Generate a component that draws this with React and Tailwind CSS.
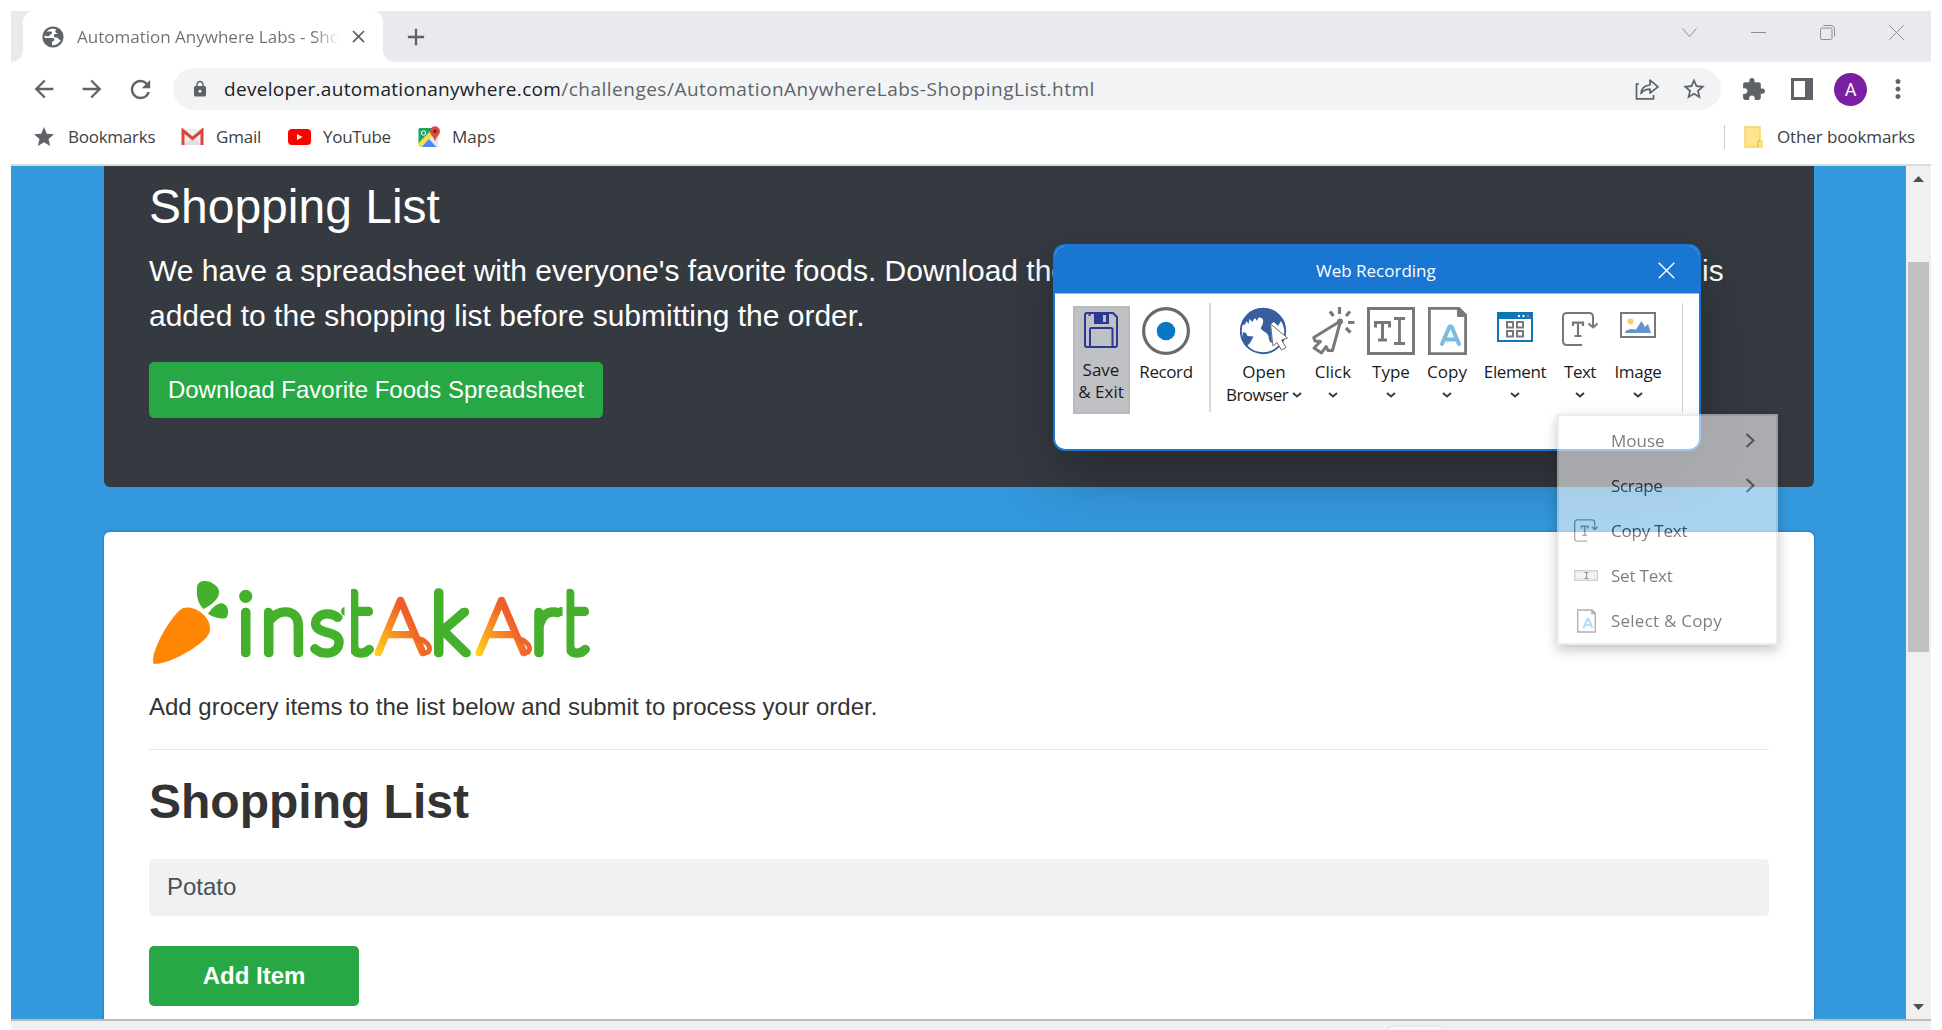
import React from "react";
import {
  MdArrowBack,
  MdArrowForward,
  MdRefresh,
  MdLock,
  MdStar,
  MdStarBorder,
  MdExtension,
  MdMoreVert,
  MdClose,
  MdAdd,
} from "react-icons/md";

const ui = "font-['Open_Sans','Noto_Sans',sans-serif]";
const page = "font-['Liberation_Sans',Arial,sans-serif]";

function GlobeFavicon() {
  return (
    <svg className="size-[22px] shrink-0" viewBox="0 0 22 22">
      <circle cx="11" cy="11" r="10.600" fill="#5f6368" />
      <path
        d="M14.500 3.300C10 1.500 4.500 3.500 2.900 8.200C2.500 9.800 2.500 11 2.700 12H10.500C12.500 12 12.800 13.500 12.200 14.500C11.500 15.500 10 15 10 16.500V19.300C14 19.500 17.500 17.200 18.900 13.800C17.800 14.300 17 13.600 16.300 12.600C15.600 11.400 14.200 11.700 12.900 11.300C11.300 10.900 11.400 9 12.600 8.300C13.600 7.700 15.200 8.300 16 7.300C14.600 7.400 13.200 6.500 13.300 5.200C13.400 4.300 13.800 3.700 14.500 3.300Z"
        fill="#fff"
      />
      <path d="M3.500 5.500H8.500C10.500 5.500 10.300 7.700 9 8.300C7.700 8.900 7.500 10.300 6 10.500L2.500 9.500Z" fill="#5f6368" />
    </svg>
  );
}

function TabStrip() {
  return (
    <div className="flex h-[51px] bg-[#e8eaed]">
      <div className="w-3 bg-white">
        <div className="h-full rounded-br-[12px] bg-[#e8eaed]" />
      </div>
      <div className="flex w-[360px] items-center rounded-t-[11px] bg-white pl-[19px] pr-[14px]">
        <GlobeFavicon />
        <div className="ml-[13px] w-[264px] overflow-hidden whitespace-nowrap bg-gradient-to-r from-[#6b6f74] from-90% to-white to-100% bg-clip-text text-[17px] leading-[24px] text-transparent">
          Automation Anywhere Labs - Sho
        </div>
        <MdClose className="ml-[9px] size-[21px] shrink-0 text-[#5f6368]" />
      </div>
      <div className="w-3 bg-white">
        <div className="h-full rounded-bl-[12px] bg-[#e8eaed]" />
      </div>
      <MdAdd className="ml-[7px] mt-[12px] size-[28px] text-[#5f6368]" />
      <div className="ml-auto mr-[27px] mt-[14px] flex gap-[54px]">
        <svg className="size-[15px]" viewBox="0 0 15 15" fill="none" stroke="#8d9095">
          <path d="M0.500 3.500L7.500 11.500L14.500 3.500" />
        </svg>
        <svg className="size-[15px]" viewBox="0 0 15 15" fill="none" stroke="#8d9095">
          <path d="M0 7.500H15" />
        </svg>
        <svg className="size-[15px]" viewBox="0 0 15 15" fill="none" stroke="#8d9095">
          <rect x="0.500" y="3" width="11.500" height="11.500" rx="1.500" />
          <path d="M3.500 0.500H11Q14.500 0.500 14.500 4V11.500" />
        </svg>
        <svg className="size-[15px]" viewBox="0 0 15 15" fill="none" stroke="#8d9095">
          <path d="M0.300 0.300L14.700 14.700M14.700 0.300L0.300 14.700" />
        </svg>
      </div>
    </div>
  );
}

function Toolbar() {
  return (
    <div className="flex h-[54px] items-center text-[#5f6368]">
      <MdArrowBack className="ml-[19px] size-[28px]" />
      <MdArrowForward className="ml-[20px] size-[28px]" />
      <MdRefresh className="ml-[20px] size-[29px]" />
      <div className="ml-[18px] flex h-[42px] w-[1548px] items-center rounded-full bg-[#f1f3f4] pl-[18px] pr-[14px]">
        <MdLock className="size-[18px]" />
        <div className="ml-[15px] whitespace-nowrap text-[19px] leading-[28px] tracking-[0.500px] text-[#5f6368]">
          <span className="tracking-[0.310px] text-[#202124]">developer.automationanywhere.com</span>
          /challenges/AutomationAnywhereLabs-ShoppingList.html
        </div>
        <svg className="ml-auto h-[22px] w-[24px]" viewBox="0 0 24 22" fill="none" stroke="#5f6368" strokeWidth="1.700">
          <path d="M4 6H1.500V20.800H18.500V17" />
          <path d="M6 15.500C6.500 10.500 9.500 7.300 15 7V2.200L23 8.800L15 15V11.200C11 11.200 8 12.500 6 15.500Z" strokeLinejoin="round" />
        </svg>
        <MdStarBorder className="ml-[22px] size-[26px]" />
      </div>
      <MdExtension className="ml-[20px] size-[25px]" />
      <svg className="ml-[25px] h-[22px] w-[22px]" viewBox="0 0 22 22">
        <path fillRule="evenodd" d="M0 0H22V22H0ZM3 3V19H14V3Z" fill="#5f6368" />
      </svg>
      <div className="ml-[21px] flex size-[33px] items-center justify-center rounded-full bg-[#7b1fa2] font-['Roboto',sans-serif] text-[18px] text-white">
        A
      </div>
      <MdMoreVert className="ml-[16px] size-[30px]" />
    </div>
  );
}

function GmailIcon() {
  return (
    <svg className="h-[18px] w-[23px]" viewBox="0 0 23 18">
      <path d="M2 1H21V17H2Z" fill="#eeeeee" />
      <path d="M3 17L11.500 9L20 17Z" fill="#e0e0e0" />
      <path d="M2 17V2.500L11.500 10.500L21 2.500V17" fill="none" stroke="#db4437" strokeWidth="3" />
    </svg>
  );
}

function YouTubeIcon() {
  return (
    <svg className="h-[16px] w-[23px]" viewBox="0 0 23 16">
      <rect width="23" height="16" rx="4" fill="#ff0000" />
      <path d="M9 5V11L14.500 8Z" fill="#fff" />
    </svg>
  );
}

function MapsIcon() {
  return (
    <svg className="h-[22px] w-[23px]" viewBox="0 0 23 22">
      <rect x="0.500" y="2" width="19.500" height="19" rx="1.500" fill="#e8e8e8" />
      <path d="M0.500 3.500Q0.500 2 2 2H16L0.500 18.500Z" fill="#1fa463" />
      <path d="M0.500 17L14 3.500L18 6L3 21H2Q0.500 21 0.500 19.500Z" fill="#ffd94a" />
      <path d="M3.500 21L11 13L18.500 21Z" fill="#4a8af4" />
      <circle cx="5.500" cy="7" r="2.200" fill="none" stroke="#fff" strokeWidth="1" />
      <path d="M17 0.300A5 5 0 0 1 22 5.300C22 9.300 17.500 11 17 16C16.500 11 12 9.300 12 5.300A5 5 0 0 1 17 0.300Z" fill="#dd4b3e" />
      <circle cx="17" cy="5.300" r="1.800" fill="#7d1e17" />
    </svg>
  );
}

function Bookmarks() {
  return (
    <div className="flex h-[48px] items-center pb-[6px] text-[17px] leading-[24px] text-[#3c4043]">
      <MdStar className="ml-[21px] size-[24px] text-[#5f6368]" />
      <span className="ml-[12px] w-[90px] whitespace-nowrap tracking-[-0.250px]">Bookmarks</span>
      <div className="ml-[23px]"><GmailIcon /></div>
      <span className="ml-[12px] w-[49px] tracking-[-0.200px]">Gmail</span>
      <div className="ml-[23px]"><YouTubeIcon /></div>
      <span className="ml-[12px] w-[72px] tracking-[-0.300px]">YouTube</span>
      <div className="ml-[23px]"><MapsIcon /></div>
      <span className="ml-[11px]">Maps</span>
      <div className="ml-auto h-[24px] w-px bg-[#c9cbce]" />
      <svg className="ml-[19px] h-[22px] w-[19px]" viewBox="0 0 19 22">
        <path d="M1 1H16V14.500Q18 14.500 18 16.500V21H1Z" fill="#ffe48f" stroke="#f8d45c" strokeWidth="1.400" />
        <path d="M14 20.500V16.500Q14 14.500 16 14.500" fill="none" stroke="#eec02f" strokeWidth="1.400" />
      </svg>
      <span className="ml-[14px] mr-[16px] whitespace-nowrap tracking-[-0.100px]">Other bookmarks</span>
    </div>
  );
}

function Logo() {
  return (
    <svg className="block h-[87px] w-[444px]" viewBox="149 577 444 87">
      <defs>
        <linearGradient id="warmLeft" gradientUnits="userSpaceOnUse" x1="375" y1="655" x2="415" y2="625">
          <stop offset="0" stopColor="#ffd61c" />
          <stop offset="0.500" stopColor="#f99a22" />
          <stop offset="1" stopColor="#ef5d28" />
        </linearGradient>
        <linearGradient id="warmRight" gradientUnits="userSpaceOnUse" x1="476" y1="655" x2="516" y2="625">
          <stop offset="0" stopColor="#ffd61c" />
          <stop offset="0.500" stopColor="#f99a22" />
          <stop offset="1" stopColor="#ef5d28" />
        </linearGradient>
        <clipPath id="wordmark">
          <rect x="230" y="577" width="114.500" height="87" />
          <rect x="351" y="577" width="211.500" height="87" />
          <rect x="566.500" y="577" width="30" height="87" />
        </clipPath>
      </defs>
      <path
        d="M154.500 664C152.500 664 153 659 153.500 656C157 641 170 619 180 610C189 602 211 614 210 629C210 633 208 636 204 640C192 651 168 664 154.500 664Z"
        fill="#ff8604"
      />
      <path
        d="M203.500 609C197 603 196.500 594 197 587C198 580 207 580 212 583C219 587 220.500 591 218 597C215 602 210 606 203.500 609Z"
        fill="#45b02b"
      />
      <path
        d="M208 613.500C212 608 218 602 223 603.500C229 606 229 613 226.500 617.500C225 620 213 618 208 613.500Z"
        fill="#45b02b"
      />
      <text
        y="652.700"
        className="font-['Lato',sans-serif] font-thin"
        clipPath="url(#wordmark)"
        fontSize="84"
        fill="#45b02b"
        stroke="#45b02b"
        strokeWidth="8.500"
        strokeLinejoin="round"
        strokeLinecap="round"
      >
        <tspan x="237">i</tspan>
        <tspan x="260.400">n</tspan>
        <tspan x="310" fontSize="81">s</tspan>
        <tspan x="342.500" fontSize="88">t</tspan>
        <tspan x="376" fontSize="77" fill="url(#warmLeft)" stroke="url(#warmLeft)" strokeWidth="6.500">A</tspan>
        <tspan x="430.500">k</tspan>
        <tspan x="477" fontSize="77" fill="url(#warmRight)" stroke="url(#warmRight)" strokeWidth="6.500">A</tspan>
        <tspan x="530.700">r</tspan>
        <tspan x="558.500" fontSize="88">t</tspan>
      </text>
      <g fill="none" stroke="#f0652a" strokeWidth="5" strokeLinecap="round">
        <path d="M417 638C425 640 430 645 429.500 649C429 653 425 654 422.500 652" />
        <path d="M517 638C525 640 530 645 529.500 649C529 653 525 654 522.500 652" />
      </g>
    </svg>
  );
}

function PageContent() {
  return (
    <div className={`flex h-[853px] overflow-hidden bg-[#3498dd] ${page}`}>
      <div className="ml-[93px] w-[1710px]">
        <section className="h-[321px] rounded-b-[6px] bg-[#353a41] px-[45px] pt-[12px] text-white">
          <h1 className="text-[48px] leading-[58px]">Shopping List</h1>
          <div className="mt-[12px] text-[30px] leading-[45px]">
            <div className="flex">
              <span className="w-[1553px] whitespace-nowrap">
                We have a spreadsheet with everyone's favorite foods. Download the
              </span>
              <span>is</span>
            </div>
            <p>added to the shopping list before submitting the order.</p>
          </div>
          <button className="mt-[24px] block h-[56px] w-[454px] rounded-[5px] bg-[#28a745] text-[24px] leading-[36px]">
            Download Favorite Foods Spreadsheet
          </button>
        </section>
        <section className="mt-[45px] h-[520px] rounded-t-[6px] bg-white px-[45px] pt-[45px] text-[24px] text-[#333333] shadow-[0_0_3px_rgba(0,0,0,0.300)]">
          <Logo />
          <p className="mt-[25px] leading-[36px]">Add grocery items to the list below and submit to process your order.</p>
          <hr className="mt-[24px] border-t border-[#e5e5e5]" />
          <h2 className="mt-[23px] text-[48px] font-bold leading-[58px]">Shopping List</h2>
          <div className="mt-[28px] flex h-[57px] items-center rounded-[5px] bg-[#f1f1f1] pb-[2px] pl-[18px] text-[24px] text-[#495057]">
            Potato
          </div>
          <button className="mt-[30px] block h-[60px] w-[210px] rounded-[5px] bg-[#28a745] text-[24px] font-bold text-white">
            Add Item
          </button>
        </section>
      </div>
      <div className="ml-auto flex w-[25px] flex-col items-center bg-[#f0f0f0]">
        <svg className="mt-[10px] h-[6px] w-[11px]" viewBox="0 0 11 6"><path d="M0 6L5.500 0L11 6Z" fill="#505050" /></svg>
        <div className="mt-[80px] h-[390px] w-[21px] bg-[#c1c1c1]" />
        <svg className="mb-[9px] mt-auto h-[6px] w-[11px]" viewBox="0 0 11 6"><path d="M0 0L5.500 6L11 0Z" fill="#505050" /></svg>
      </div>
    </div>
  );
}

const GRAY = "#77787b";

function SaveIcon() {
  return (
    <svg className="h-[36px] w-[34px]" viewBox="0 0 34 36" fill="none" stroke="#2b3990" strokeWidth="2">
      <path d="M3 1H29L33 5V33Q33 35 31 35H3Q1 35 1 33V3Q1 1 3 1Z" />
      <path d="M6 35V17.500Q6 16 7.500 16H27Q28.500 16 28.500 17.500V35" />
      <path fillRule="evenodd" d="M10 0H25V12H10ZM19 3V10H22V3Z" fill="#2b3990" stroke="none" />
      <path d="M5.500 1V4" />
    </svg>
  );
}

function RecordIcon() {
  return (
    <svg className="size-[48px]" viewBox="0 0 48 48">
      <circle cx="24" cy="24" r="22.400" fill="#fff" stroke="#696a6c" strokeWidth="3.200" />
      <circle cx="24" cy="24" r="9.300" fill="#0a77c4" />
    </svg>
  );
}

function BrowserIcon() {
  return (
    <svg className="size-[48px]" viewBox="0 0 48 48">
      <circle cx="23" cy="24" r="22.200" fill="#fff" stroke="#375f9f" strokeWidth="1.900" />
      <path
        d="M4 13C8 5 15 1 23 1C32 1 40 6 44 14C45 17 46 21 45.500 26L43 18L41 14L38 19L34 15L31 17L32 36C29 35 29 32 28.500 29C27.500 26 24.500 25 21.500 22.500C19.500 20.500 24 18 23 13C22.500 10.500 20 11 18.500 10.500L17 14L15.500 11.500C14 11 13 13.500 12.500 15L9.500 12L8.500 17L6.500 14L5 17.500L2 18C2 16 3 14.500 4 13Z"
        fill="#375f9f"
      />
      <path d="M3 25L6 26L7.500 29L13.500 29.500L10 36L6 40L2 33Z" fill="#375f9f" />
      <path d="M30.500 17L33 39L37 35.500L41.500 43L46 40.500L41.500 33L47.500 31Z" fill="#fff" stroke="#6b6c70" strokeWidth="1" />
    </svg>
  );
}

function ClickIcon() {
  return (
    <svg className="h-[48px] w-[43px]" viewBox="0 0 43 48" fill="none" stroke={GRAY} strokeWidth="3">
      <path d="M28.500 14L1.800 30.500L3 34L8.500 34.500L2 41L9.500 46L14 39.500L16 43.500L20.500 43.500Z" strokeLinejoin="round" />
      <circle cx="28" cy="14.500" r="3" fill={GRAY} stroke="none" />
      <path d="M27.500 0V7M18 4.500L21.500 9M38 4.500L34 9M36 15.500H42.500M34 21L38.500 25.500" strokeWidth="3.200" />
    </svg>
  );
}

function TypeIcon() {
  return (
    <svg className="size-[48px]" viewBox="0 0 48 48" fill="none" stroke={GRAY}>
      <rect x="1.500" y="1.500" width="45" height="45" strokeWidth="3" />
      <path d="M8.500 20.500V15.500H22.500V20.500M15.500 15.500V33M11 33H20" strokeWidth="3" />
      <path d="M27 11.500H38M32.500 11.500V36.500M27 36.500H38" strokeWidth="2.800" />
    </svg>
  );
}

function CopyIcon({ small }) {
  return (
    <svg className={small ? "h-[24px] w-[19px]" : "h-[48px] w-[39px]"} viewBox="0 0 39 48" fill="none">
      <path d="M1.400 1.400H31L37.600 8V46.600H1.400Z" stroke={GRAY} strokeWidth="2.800" />
      <path d="M29.500 1V9.500H38" fill={GRAY} stroke={GRAY} />
      <path d="M14 37L21.500 19.500H23.500L31 37M17 32.500H28" stroke="#7abce3" strokeWidth="4" strokeLinecap="round" strokeLinejoin="round" />
    </svg>
  );
}

function ElementIcon() {
  return (
    <svg className="h-[30px] w-[36px]" viewBox="0 0 36 30" fill="none">
      <rect x="1" y="1" width="34" height="28" fill="#fff" stroke="#0f76b5" strokeWidth="2" />
      <path d="M0 0H36V7H0Z" fill="#0f76b5" />
      <circle cx="22" cy="4" r="1.200" fill="#fff" />
      <circle cx="26.500" cy="4" r="1.200" fill="#fff" />
      <circle cx="31" cy="4" r="1.400" fill="#f0566a" />
      <path d="M10 10H16V15.500H10ZM20 10H26V15.500H20ZM10 19H16V24.500H10ZM20 19H26V24.500H20Z" stroke={GRAY} strokeWidth="2" />
    </svg>
  );
}

function TextIcon({ small }) {
  return (
    <svg className={small ? "h-[23px] w-[24px]" : "h-[34px] w-[36px]"} viewBox="0 0 36 34" fill="none" stroke={GRAY} strokeWidth="2">
      <path d="M20 33H5Q1 33 1 29V5Q1 1 5 1H27Q31 1 31 5V15M26.500 11.500L31 15.500L35.500 11.500" />
      <path d="M11 14V10.700H21V14M16 10.700V24M12.500 24H19.500" strokeWidth="2.200" />
    </svg>
  );
}

function ImageIcon() {
  return (
    <svg className="h-[26px] w-[36px]" viewBox="0 0 36 26" fill="none">
      <rect x="1" y="1" width="34" height="24" fill="#fff" stroke={GRAY} strokeWidth="2" />
      <circle cx="10.500" cy="9.500" r="3" fill="#edd468" />
      <path d="M5 21L6 18.500L11 17L16 17.500L21.500 9L25 15L28 12L31 21Z" fill="#6792cf" />
    </svg>
  );
}

function SetTextIcon() {
  return (
    <svg className="h-[11px] w-[24px]" viewBox="0 0 24 11" fill="none">
      <rect x="0.700" y="0.700" width="22.600" height="9.600" fill="#eef1f1" stroke="#aab2b0" strokeWidth="1.400" />
      <rect x="3.500" y="2.500" width="17" height="6" stroke="#9cc6de" strokeDasharray="1 1" />
      <path d="M10.500 2.500H14.500M12.500 2.500V8.500M10.500 8.500H14.500" stroke="#444" strokeWidth="1.200" />
    </svg>
  );
}

function Caret({ className = "" }) {
  return (
    <svg className={`h-[6px] w-[10px] ${className}`} viewBox="0 0 10 6" fill="none" stroke="#3b3b3b" strokeWidth="2">
      <path d="M1 1L5 4.500L9 1" />
    </svg>
  );
}

function Tool({ icon, label, className, labelClass = "", caret = true, iconPad = "" }) {
  return (
    <div className={`flex flex-col items-center ${className}`}>
      <div className={`flex h-[53px] items-start ${iconPad}`}>{icon}</div>
      <span className={`whitespace-nowrap leading-[23px] ${labelClass}`}>{label}</span>
      {caret && <Caret className="mt-[9px]" />}
    </div>
  );
}

function RecorderDialog() {
  return (
    <div className="absolute left-[1053px] top-[244px] flex h-[207px] w-[648px] flex-col overflow-hidden rounded-[12px] border-2 border-[#1a76d3] bg-white text-[17px] text-[#1b1b1b]">
      <div className="flex h-[48px] shrink-0 items-center border-b border-[#8fbdec] bg-[#1a76d3] text-white">
        <span className="ml-[261px] mt-[3px] leading-[24px]">Web Recording</span>
        <svg className="ml-auto mr-[24px] mt-px size-[17px]" viewBox="0 0 17 17" stroke="#fff" strokeWidth="1.400">
          <path d="M0.700 0.700L16.300 16.300M16.300 0.700L0.700 16.300" />
        </svg>
      </div>
      <div className="flex pt-[9px]">
        <div className="ml-[18px] mt-[3px] flex h-[108px] w-[57px] flex-col items-center border-2 border-[#b9babd] bg-[#bfc1c5] pr-px pt-[4px] leading-[22px]">
          <SaveIcon />
          <span className="mt-[11px]">Save</span>
          <span className="whitespace-nowrap">&amp; Exit</span>
        </div>
        <Tool className="ml-[6px] w-[60px] pt-[4px]" icon={<RecordIcon />} label="Record" labelClass="tracking-[-0.400px]" caret={false} />
        <div className="ml-[13px] h-[109px] w-[2px] bg-[#d8d9dd]" />
        <div className="ml-[11px] flex w-[84px] flex-col items-center pt-[4px]">
          <div className="h-[53px]"><BrowserIcon /></div>
          <span className="leading-[23px]">Open</span>
          <div className="flex items-center gap-[4px] leading-[23px]">
            <span className="tracking-[-0.550px]">Browser</span>
            <Caret />
          </div>
        </div>
        <Tool className="ml-[5px] w-[44px] pt-[4px]" icon={<ClickIcon />} label="Click" />
        <Tool className="ml-[12px] w-[48px] pt-[4px]" icon={<TypeIcon />} label="Type" />
        <Tool className="ml-[9px] w-[46px] pt-[4px]" icon={<CopyIcon />} label="Copy" />
        <Tool className="ml-[12px] w-[66px] pt-[4px]" iconPad="pt-[5px]" icon={<ElementIcon />} label="Element" labelClass="tracking-[-0.400px]" />
        <Tool className="ml-[10px] w-[44px] pt-[4px]" iconPad="pt-[5px]" icon={<TextIcon />} label="Text" labelClass="tracking-[-0.500px]" />
        <Tool className="ml-[10px] w-[52px] pt-[4px]" iconPad="pt-[5px]" icon={<ImageIcon />} label="Image" labelClass="tracking-[-0.300px]" />
        <div className="ml-[18px] h-[109px] w-px bg-[#cfd0d3]" />
      </div>
    </div>
  );
}

function MenuRow({ icon, label, arrow, labelClass = "" }) {
  return (
    <div className="flex h-[45px] items-center">
      <div className="ml-[15px] flex w-[24px] justify-center">{icon}</div>
      <span className={`ml-[13px] whitespace-nowrap leading-[24px] ${labelClass}`}>{label}</span>
      {arrow && (
        <svg className="ml-auto mr-[21px] h-[15px] w-[10px]" viewBox="0 0 10 15" fill="none" stroke="#6a6a6a" strokeWidth="2.200">
          <path d="M1.500 1L8.500 7.500L1.500 14" />
        </svg>
      )}
    </div>
  );
}

function TextMenu() {
  return (
    <div className="absolute left-[1557px] top-[414px] h-[231px] w-[221px] border-2 border-[#e0e0e0] bg-white pt-[2px] text-[17px] text-[#222] opacity-[0.580] shadow-[0_5px_12px_rgba(0,0,0,0.400)]">
      <MenuRow label="Mouse" arrow />
      <MenuRow label="Scrape" arrow labelClass="tracking-[-0.400px]" />
      <MenuRow label="Copy Text" icon={<TextIcon small />} labelClass="tracking-[-0.200px]" />
      <MenuRow label="Set Text" icon={<SetTextIcon />} labelClass="tracking-[-0.200px]" />
      <MenuRow label="Select & Copy" icon={<CopyIcon small />} labelClass="tracking-[0.230px]" />
    </div>
  );
}

export default function App() {
  return (
    <div className={`relative h-[1030px] w-[1942px] overflow-hidden bg-white px-[11px] pt-[11px] ${ui}`}>
      <TabStrip />
      <Toolbar />
      <Bookmarks />
      <div className="border-t-2 border-[#dadcdc]">
        <PageContent />
      </div>
      <div className="h-[11px] overflow-hidden border-t-2 border-[#bcbcbc] bg-[#f0f0f0]">
        <div className="ml-[1376px] mt-[4px] h-[20px] w-[57px] rounded-[5px] border-2 border-[#e8e8e8] bg-[#f9f9f9]" />
      </div>
      <div className="absolute left-[1053px] top-[244px] h-[207px] w-[648px] rounded-[12px] shadow-[0_24px_60px_rgba(0,0,0,0.280)]" />
      <RecorderDialog />
      <TextMenu />
    </div>
  );
}
